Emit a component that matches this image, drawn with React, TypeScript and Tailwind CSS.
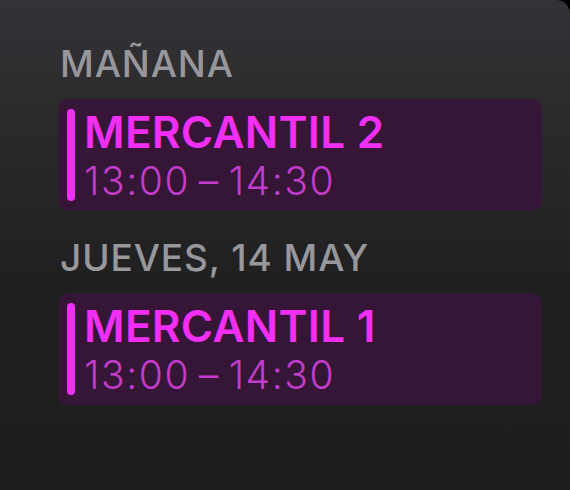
const events = [
  { day: 'MAÑANA', title: 'MERCANTIL 2', time: '13:00\u2009–\u200914:30' },
  { day: 'JUEVES, 14 MAY', title: 'MERCANTIL 1', time: '13:00\u2009–\u200914:30' },
];

const App = () => {
  return (
    <div className="w-[570px] h-[490px] bg-black">
      <div
        className="w-full h-full rounded-tr-[14px] overflow-hidden bg-[linear-gradient(180deg,#333236_0%,#29292b_30%,#1f1f20_60%,#1e1e1f_100%)]
                   pl-[58px] pr-[28px] pt-[42px] flex flex-col"
        style={{ fontFamily: 'Inter, "Noto Sans", sans-serif' }}
      >
        {events.map((ev, i) => (
          <div key={ev.title} className={i > 0 ? 'mt-[25px]' : ''}>
            {/* Day header */}
            <div className="pl-[2px] text-[37px] leading-[44px] font-medium text-[#98979c] tracking-[0.9px]">
              {ev.day}
            </div>

            {/* Event card */}
            <div className="mt-[13px] h-[112px] rounded-[10px] bg-[#361636] flex gap-[9px] px-[9px] py-[10px]">
              <div className="w-[8px] rounded-full bg-[#f22ef6]" />
              <div className="flex flex-col">
                <div className="text-[44px] leading-[46px] font-semibold text-[#f02ef4] tracking-[0.3px]">
                  {ev.title}
                </div>
                <div className="mt-[6px] text-[39px] leading-[40px] font-light text-[#c43ccb] tracking-[1.6px]">
                  {ev.time}
                </div>
              </div>
            </div>
          </div>
        ))}
      </div>
    </div>
  );
};

export default App;
